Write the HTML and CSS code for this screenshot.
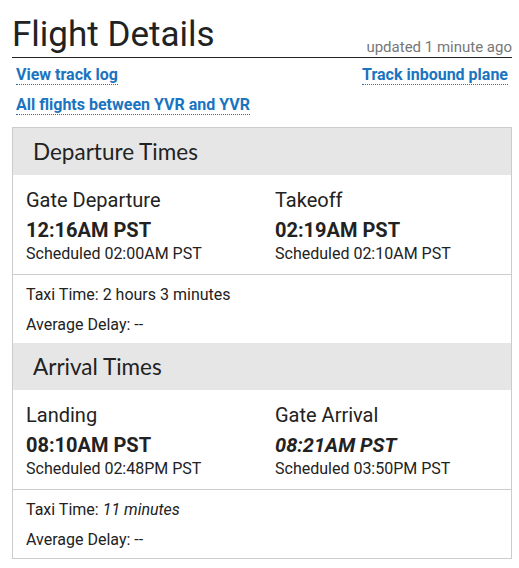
FILE: index.html
```html
<!DOCTYPE html>
<html>
<head>
<meta charset="utf-8">
<link rel="stylesheet" href="styles.css">
</head>
<body>
<div class="page">
  <div class="title-bar">
    <h1 class="title">Flight Details</h1>
    <span class="updated">updated 1 minute ago</span>
  </div>
  <div class="links">
    <a class="link" href="#">View track log</a>
    <a class="link" href="#">Track inbound plane</a>
  </div>
  <div class="links">
    <a class="link" href="#">All flights between YVR and YVR</a>
  </div>
  <div class="box">
    <div class="section-head">Departure Times</div>
    <div class="times">
      <div class="time-col">
        <div class="label">Gate Departure</div>
        <div class="actual">12:16AM PST</div>
        <div class="sched">Scheduled 02:00AM PST</div>
      </div>
      <div class="time-col">
        <div class="label">Takeoff</div>
        <div class="actual">02:19AM PST</div>
        <div class="sched">Scheduled 02:10AM PST</div>
      </div>
    </div>
    <div class="extra">
      <div class="extra-line">Taxi Time: 2 hours 3 minutes</div>
      <div class="extra-line">Average Delay: --</div>
    </div>
    <div class="section-head">Arrival Times</div>
    <div class="times">
      <div class="time-col">
        <div class="label">Landing</div>
        <div class="actual">08:10AM PST</div>
        <div class="sched">Scheduled 02:48PM PST</div>
      </div>
      <div class="time-col">
        <div class="label">Gate Arrival</div>
        <div class="actual est">08:21AM PST</div>
        <div class="sched">Scheduled 03:50PM PST</div>
      </div>
    </div>
    <div class="extra">
      <div class="extra-line">Taxi Time: <em>11 minutes</em></div>
      <div class="extra-line">Average Delay: --</div>
    </div>
  </div>
</div>
</body>
</html>
```

FILE: styles.css
```css
html, body {
  margin: 0;
  padding: 0;
  background: #fff;
}
body {
  font-family: Roboto, "Liberation Sans", sans-serif;
  color: #222;
}
.page {
  padding: 14px 7px 0 12px;
}
.title-bar {
  display: flex;
  justify-content: space-between;
  align-items: flex-end;
  border-bottom: 1px solid #222;
}
.title {
  margin: 0 0 1px;
  font-size: 35px;
  font-weight: 400;
  line-height: 42px;
  color: #222;
}
.updated {
  font-size: 15px;
  line-height: 20px;
  color: #777;
}
.links {
  display: flex;
  justify-content: space-between;
  align-items: flex-start;
  padding: 0 4px;
  margin-top: 7px;
}
.links + .links {
  margin-top: 10px;
}
.link {
  font-size: 16px;
  font-weight: 700;
  line-height: 19px;
  color: #1a74c0;
  text-decoration: none;
  border-bottom: 1px dotted #1a74c0;
}
.box {
  margin-top: 12px;
  border: 1px solid #ccc;
}
.section-head {
  background: #e6e6e6;
  font-family: Lato, "Open Sans", sans-serif;
  font-size: 22.5px;
  color: #222;
  padding: 0 20px;
  height: 47px;
  line-height: 47px;
}
.times {
  display: grid;
  grid-template-columns: 1fr 1fr;
  padding: 13px 0 10px;
  border-bottom: 1px solid #ccc;
}
.time-col {
  padding-left: 13px;
}
.label {
  font-size: 20px;
  line-height: 24px;
}
.actual {
  font-size: 20px;
  font-weight: 700;
  line-height: 24px;
  margin-top: 6px;
}
.actual.est {
  font-style: italic;
}
.sched {
  font-size: 16px;
  line-height: 21px;
  margin-top: 1px;
}
.extra {
  padding: 9px 13px 8px;
}
.extra-line {
  font-size: 16px;
  line-height: 21px;
}
.extra-line + .extra-line {
  margin-top: 9px;
}
.extra em {
  font-style: italic;
}
```
